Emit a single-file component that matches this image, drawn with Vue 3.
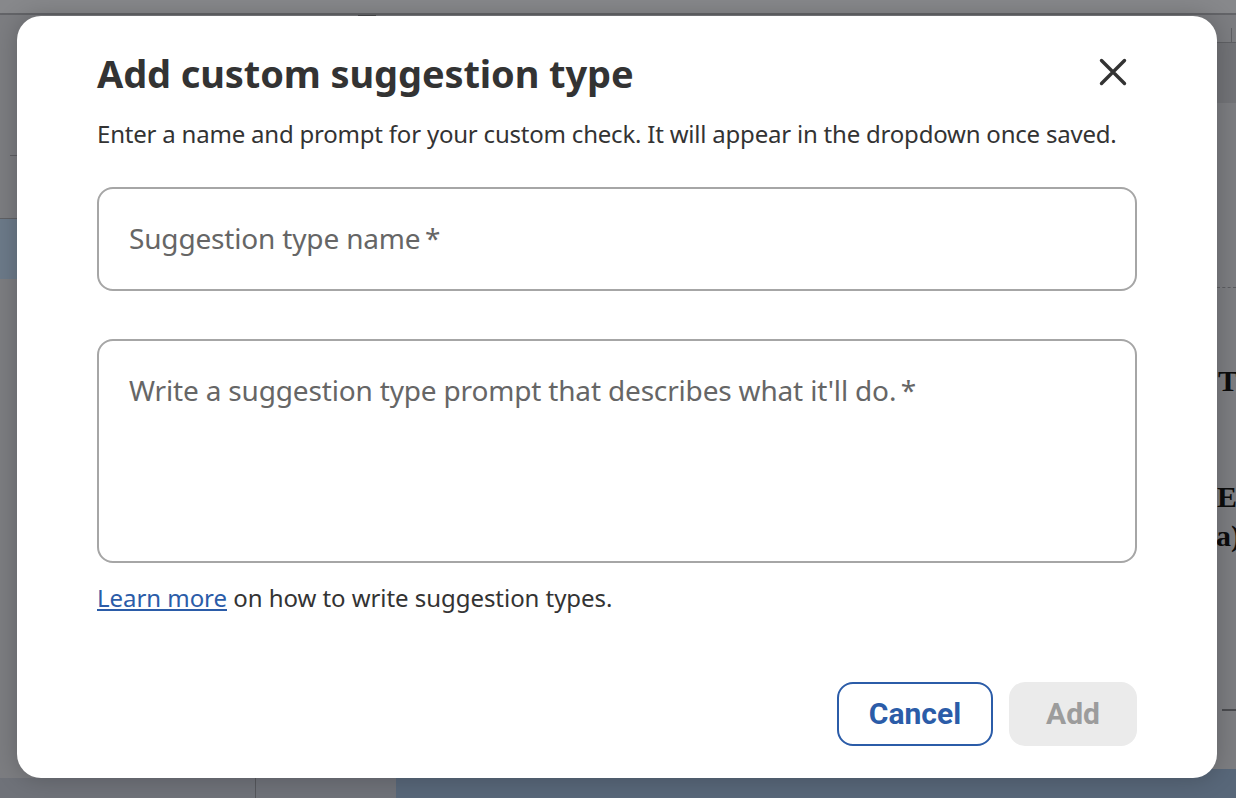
<template>
  <div class="page">
    <!-- document behind the overlay, only the slivers around the dialog show -->
    <div class="behind" aria-hidden="true">
      <div class="top-bar"></div>
      <div class="top-mark"></div>
      <div class="ruler"></div>
      <div class="ruler-tick"></div>
      <div class="left-tick"></div>
      <div class="left-row"></div>
      <div class="dash"></div>
      <span class="doc-text t">T</span>
      <span class="doc-text e">E</span>
      <span class="doc-text a">a)</span>
      <div class="right-tick"></div>
      <div class="bottom-grey"></div>
      <div class="bottom-line"></div>
      <div class="bottom-blue"></div>
    </div>

    <div class="modal">
      <div class="head">
        <h2 class="title">Add custom suggestion type</h2>
        <button class="close" type="button" aria-label="Close">
          <svg width="30" height="30" viewBox="0 0 30 30" fill="none">
            <path d="M3.5 3.5l23 23M26.5 3.5l-23 23" stroke="#333" stroke-width="3.4" stroke-linecap="round" />
          </svg>
        </button>
      </div>
      <p class="sub">Enter a name and prompt for your custom check. It will appear in the dropdown once saved.</p>

      <input class="field name" type="text" placeholder="Suggestion type name&#8201;*" />
      <textarea class="field prompt" placeholder="Write a suggestion type prompt that describes what it'll do.&#8201;*"></textarea>

      <p class="learn"><a href="#">Learn more</a> on how to write suggestion types.</p>

      <div class="actions">
        <button class="btn cancel" type="button">Cancel</button>
        <button class="btn add" type="button" disabled>Add</button>
      </div>
    </div>
  </div>
</template>

<script setup>
</script>

<style>
html, body { margin: 0; height: 100%; overflow: hidden; }
</style>

<style scoped>
.page {
  position: relative;
  box-sizing: border-box;
  height: 798px;
  padding: 16px 19px 20px 17px;
  background: #7c7d81;
  overflow: hidden;
  font-family: "Noto Sans", sans-serif;
}

.behind div, .behind span { position: absolute; }
.top-bar { left: 0; right: 0; top: 0; height: 13px; background: #87888b; border-bottom: 2px solid #636468; }
.top-mark { left: 358px; top: 15px; width: 18px; height: 1px; background: #4a4b4f; }
.ruler { left: 1217px; right: 0; top: 42px; height: 60px; background: #727377; border-top: 1px solid #5f6064; }
.ruler-tick { left: 1231px; top: 28px; width: 1px; height: 14px; background: #5f6064; }
.left-tick { left: 10px; top: 155px; width: 7px; height: 1px; background: #5f6064; }
.left-row { left: 0; top: 218px; width: 17px; height: 60px; background: #6c7a89; border-top: 1px solid #5f6064; }
.dash { left: 1217px; right: 0; top: 287px; border-top: 1px dashed #5c5d61; }
.doc-text { font: bold 30px "Liberation Serif", serif; color: #0c0c0c; line-height: 32px; }
.t { left: 1218px; top: 365px; }
.e { left: 1217px; top: 481px; }
.a { left: 1216px; top: 520px; }
.right-tick { left: 1222px; right: 0; top: 709px; height: 2px; background: #4a4b4f; }
.bottom-grey { left: 0; top: 778px; width: 396px; height: 20px; background: #6f7279; }
.bottom-line { left: 255px; top: 778px; width: 1px; height: 20px; background: #55575c; }
.bottom-blue { left: 396px; right: 0; top: 769px; height: 29px; background: #586779; }

.modal {
  position: relative;
  box-sizing: border-box;
  height: 762px;
  padding: 34px 80px 32px;
  background: #fff;
  border-radius: 24px;
  box-shadow: 0 0 24px rgba(0, 0, 0, 0.22);
  color: #333;
}
.head {
  display: flex;
  justify-content: space-between;
  align-items: center;
  height: 48px;
}
.title {
  margin: -2px 0 0;
  font-size: 38px;
  line-height: 48px;
  font-weight: 700;
  letter-spacing: -0.11px;
}
.close {
  display: flex;
  margin: -4px 9px 0 0;
  padding: 0;
  border: 0;
  background: none;
}
.sub {
  margin: 20px 0 37px;
  font-size: 24px;
  line-height: 32px;
  letter-spacing: -0.21px;
}
.field {
  display: block;
  box-sizing: border-box;
  width: 100%;
  padding: 0 30px;
  border: 2px solid #a6a6a6;
  border-radius: 16px;
  background: #fff;
  color: #333;
  font-family: inherit;
  font-size: 28px;
  letter-spacing: -0.17px;
  outline: none;
}
.field::placeholder { color: #666; opacity: 1; }
.name { height: 104px; padding-bottom: 2px; }
.prompt {
  height: 224px;
  margin-top: 48px;
  padding-top: 29px;
  line-height: 40px;
  resize: none;
}
.learn {
  margin: 19px 0 0;
  font-size: 24px;
  line-height: 32px;
  letter-spacing: -0.05px;
}
.learn a { color: #2b5ca8; }
.actions {
  display: flex;
  justify-content: flex-end;
  gap: 16px;
  margin-top: 68px;
}
.btn {
  box-sizing: border-box;
  height: 64px;
  padding: 0 0 2px;
  border-radius: 16px;
  font-family: Roboto, sans-serif;
  font-size: 30px;
  font-weight: 700;
}
.cancel {
  width: 156px;
  border: 2px solid #2b5ca8;
  background: #fff;
  color: #2b5ca8;
}
.add {
  width: 128px;
  border: 0;
  background: #ebebeb;
  color: #9c9c9c;
}
</style>
